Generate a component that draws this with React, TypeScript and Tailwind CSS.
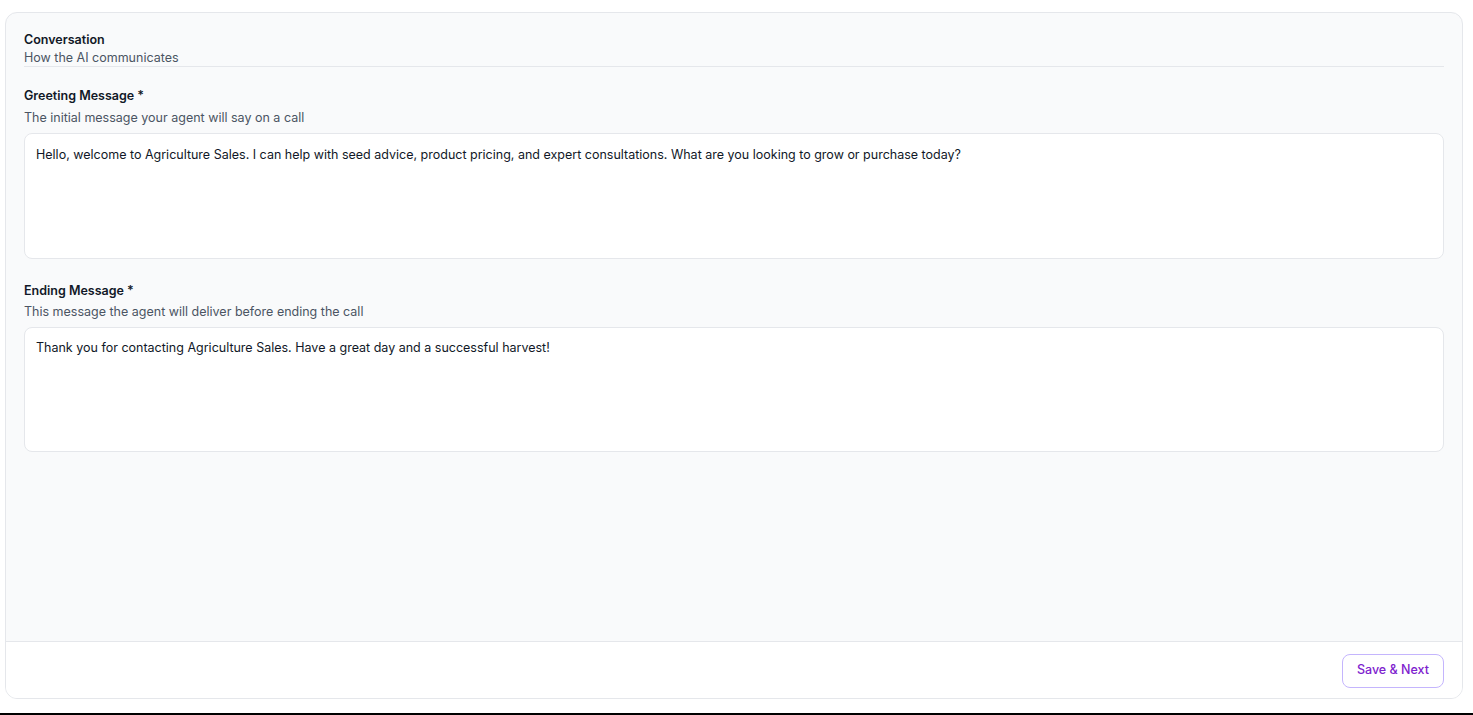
export default function App() {
  return (
    <div className="h-[715px] w-[1473px] bg-[#f3f4f6] flex flex-col" style={{ fontFamily: 'Inter, "Liberation Sans", sans-serif' }}>
      <div className="flex-1 pt-[12px] pl-[5px] pr-[10px] pb-[14px] bg-white">
        <div className="h-full flex flex-col rounded-xl border border-[#e5e7eb] bg-[#f9fafb] overflow-hidden">
          <div className="flex-1 pt-[18px] px-[18px]">
            <div className="border-b border-[#e5e7eb]">
              <div className="text-[12.5px] font-semibold text-[#111827] leading-[18px]">Conversation</div>
              <div className="text-[12.5px] text-[#4b5563] leading-[17px]">How the AI communicates</div>
            </div>
            <div className="mt-[20px]">
              <div className="text-[12.5px] font-semibold text-[#111827] leading-[18px]">Greeting Message *</div>
              <div className="text-[12.5px] text-[#4b5563] leading-[18px] mt-[4px]">The initial message your agent will say on a call</div>
              <div className="mt-[6px] h-[126px] rounded-lg border border-[#e5e7eb] bg-white px-[11px] py-[12px] text-[12.5px] text-[#111827] leading-[18px]">
                Hello, welcome to Agriculture Sales. I can help with seed advice, product pricing, and expert consultations. What are you looking to grow or purchase today?
              </div>
            </div>
            <div className="mt-[23px]">
              <div className="text-[12.5px] font-semibold text-[#111827] leading-[18px]">Ending Message *</div>
              <div className="text-[12.5px] text-[#4b5563] leading-[18px] mt-[3px]">This message the agent will deliver before ending the call</div>
              <div className="mt-[6px] h-[125px] rounded-lg border border-[#e5e7eb] bg-white px-[11px] py-[11px] text-[12.5px] text-[#111827] leading-[18px]">
                Thank you for contacting Agriculture Sales. Have a great day and a successful harvest!
              </div>
            </div>
          </div>
          <div className="h-[57px] border-t border-[#e5e7eb] bg-white flex items-center justify-end px-[18px]">
            <button className="h-[34px] px-[14px] rounded-lg border border-[#c4b5fd] bg-white text-[12.5px] font-medium text-[#7e22ce] mt-[1px]">Save &amp; Next</button>
          </div>
        </div>
      </div>
      <div className="h-[2px] bg-black" />
    </div>
  );
}
